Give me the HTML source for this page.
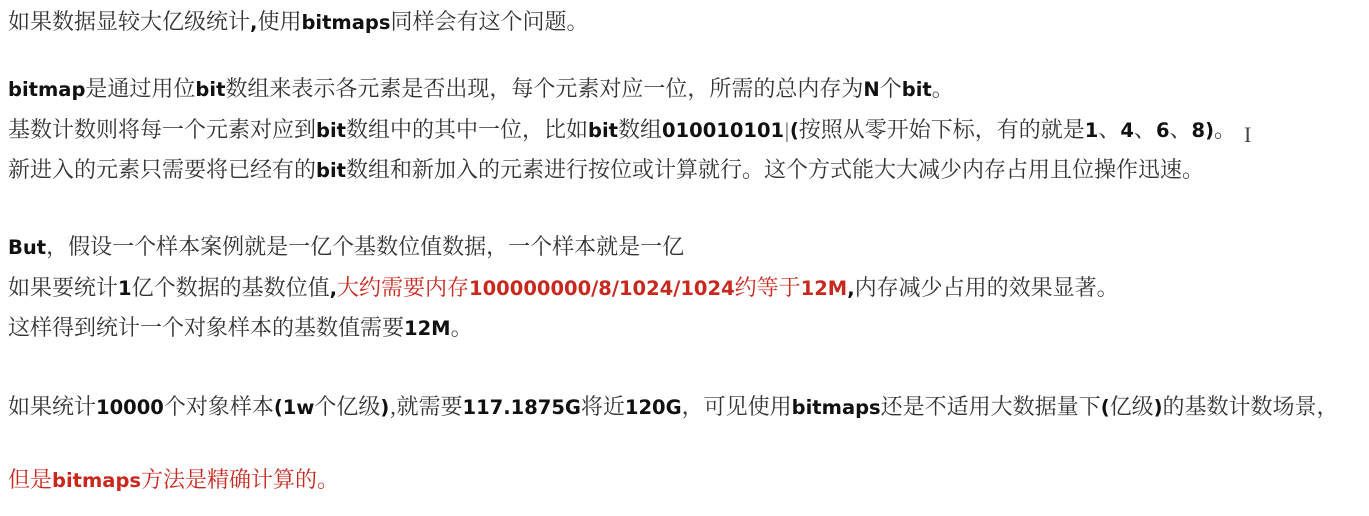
<!DOCTYPE html>
<html><head><meta charset="utf-8"><style>
body{margin:0;width:1369px;height:516px;background:#fff;overflow:hidden;position:relative;}
.l{position:absolute;left:8px;white-space:nowrap;font-size:22px;line-height:24px;color:#333;font-family:"Noto Serif CJK SC",serif;}
.l b{font-weight:bold;color:#111;font-family:"DejaVu Sans",sans-serif;font-size:19.5px;}
.r,.r b{color:#c8281e;}
</style></head><body>
<div class="l" style="top:9px">如果数据显较大亿级统计<b>,</b>使用<b>bitmaps</b>同样会有这个问题。</div>
<div class="l" style="top:76px"><b>bitmap</b>是通过用位<b>bit</b>数组来表示各元素是否出现，每个元素对应一位，所需的总内存为<b>N</b>个<b>bit</b>。</div>
<div class="l" style="top:117px">基数计数则将每一个元素对应到<b>bit</b>数组中的其中一位，比如<b>bit</b>数组<b>010010101</b><span style="font-size:18px">|</span><b>(</b>按照从零开始下标，有的就是<b>1</b>、<b>4</b>、<b>6</b>、<b>8)</b>。</div>
<div class="l" style="top:157px">新进入的元素只需要将已经有的<b>bit</b>数组和新加入的元素进行按位或计算就行。这个方式能大大减少内存占用且位操作迅速。</div>
<div class="l" style="top:234px"><b>But</b>，假设一个样本案例就是一亿个基数位值数据，一个样本就是一亿</div>
<div class="l" style="top:275px">如果要统计<b>1</b>亿个数据的基数位值<b>,</b><span class="r">大约需要内存<b>100000000/8/1024/1024</b>约等于<b>12M</b></span><b>,</b>内存减少占用的效果显著。</div>
<div class="l" style="top:315px">这样得到统计一个对象样本的基数值需要<b>12M</b>。</div>
<div class="l" style="top:394px">如果统计<b>10000</b>个对象样本<b>(1w</b>个亿级<b>)</b>,就需要<b>117.1875G</b>将近<b>120G</b>，可见使用<b>bitmaps</b>还是不适用大数据量下<b>(</b>亿级<b>)</b>的基数计数场景，</div>
<div class="l r" style="top:467px">但是<b>bitmaps</b>方法是精确计算的。</div>
<div style="position:absolute;left:1244px;top:122px;font-family:'Liberation Serif',serif;font-size:22px;color:#444">I</div>
</body></html>
